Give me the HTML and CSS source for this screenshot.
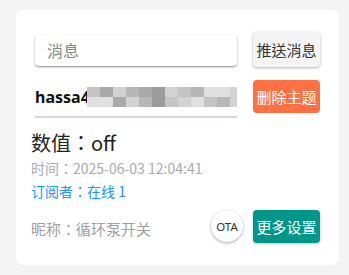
FILE: index.html
```html
<!DOCTYPE html>
<html lang="zh">
<head>
<meta charset="utf-8">
<link rel="stylesheet" href="styles.css">
</head>
<body>
<div class="card">
  <div class="row row-send">
    <div class="input"><span class="placeholder">消息</span></div>
    <button class="btn btn-light">推送消息</button>
  </div>
  <div class="row row-topic">
    <div class="topic">
      <span class="topic-text">hassa4</span><span class="mosaic">
        <i class="c1"></i><i class="c2"></i><i class="c3"></i><i class="c4"></i><i class="c2"></i><i class="c5"></i><i class="c3"></i><i class="c1"></i><i class="c4"></i><i class="c6"></i><i class="c6"></i><i class="c3"></i>
        <i class="c6"></i><i class="c6"></i><i class="c2"></i><i class="c3"></i><i class="c4"></i><i class="c5"></i><i class="c1"></i><i class="c3"></i><i class="c6"></i><i class="c1"></i><i class="c4"></i><i class="c3"></i>
      </span>
    </div>
    <button class="btn btn-orange">删除主题</button>
  </div>
  <div class="info">
    <div class="value">数值：off</div>
    <div class="time">时间：2025-06-03 12:04:41</div>
    <div class="subs">订阅者：在线 1</div>
  </div>
  <div class="row row-bottom">
    <div class="nick">昵称：循环泵开关</div>
    <div class="ota">OTA</div>
    <button class="btn btn-teal">更多设置</button>
  </div>
</div>
</body>
</html>
```
FILE: styles.css
```css
* { box-sizing: border-box; }
html, body { margin: 0; }
body {
  background: #f4f4f4;
  padding: 10px 10px 10px 16px;
  font-family: "Noto Sans CJK TC", "Noto Sans CJK SC", "Noto Sans", sans-serif;
  font-feature-settings: "locl" 0;
  color: #222;
}
.card {
  background: #fff;
  border-radius: 8px;
  padding: 22px 19px 22px 15px;
  height: 255px;
}
.row {
  display: flex;
  align-items: center;
}
.row-send, .row-topic {
  padding-left: 4px;
}
.row-send { height: 35px; }
.input {
  flex: 1;
  height: 32px;
  background: #fff;
  border-radius: 4px;
  box-shadow: 0 1px 2px rgba(0,0,0,0.45);
  display: flex;
  align-items: center;
  padding-left: 12px;
}
.placeholder {
  color: #888;
  font-size: 16px;
  line-height: 20px;
}
.btn {
  border: none;
  font-family: inherit;
  font-feature-settings: inherit;
  font-size: 15px;
  line-height: 20px;
  width: 67px;
  padding: 0;
  border-radius: 4px;
  margin-left: 16px;
  flex: none;
}
.btn-light {
  height: 35px;
  background: #f4f4f4;
  color: #333;
  box-shadow: 0 1px 3px rgba(0,0,0,0.3);
}
.row-topic {
  margin-top: 13px;
  height: 38px;
  align-items: flex-start;
}
.topic {
  flex: 1;
  height: 38px;
  border-bottom: 2px solid #ddd5d5;
  overflow: hidden;
  white-space: nowrap;
  display: flex;
  align-items: center;
  padding-bottom: 2px;
}
.topic-text {
  font-family: "Noto Sans", sans-serif;
  font-weight: bold;
  font-size: 16px;
  line-height: 20px;
  color: #111;
}
.mosaic {
  display: inline-grid;
  grid-template-columns: repeat(12, 13px);
  grid-auto-rows: 10px;
  margin-left: -3px;
  flex: none;
}
.mosaic i { display: block; }
.c1 { background: #c4c4c4; }
.c2 { background: #a9a9a9; }
.c3 { background: #d2d2d2; }
.c4 { background: #b7b7b7; }
.c5 { background: #9c9c9c; }
.c6 { background: #e0e0e0; }
.btn-orange {
  height: 33px;
  background: #ff7043;
  color: #fff;
}
.info {
  margin-top: 10px;
}
.value {
  font-size: 20px;
  line-height: 29px;
  color: #222;
}
.time {
  font-size: 14px;
  line-height: 23px;
  color: #aaa;
}
.subs {
  font-size: 14px;
  line-height: 23px;
  color: #2196f3;
}
.row-bottom {
  margin-top: 7px;
  height: 33px;
}
.nick {
  flex: 1;
  font-size: 15px;
  line-height: 20px;
  color: #a0a0a0;
  padding-top: 4px;
}
.ota {
  width: 32px;
  height: 32px;
  border-radius: 50%;
  background: #fff;
  box-shadow: 0 1px 3px rgba(0,0,0,0.35);
  display: flex;
  align-items: center;
  justify-content: center;
  font-family: "Noto Sans", sans-serif;
  font-size: 11.5px;
  color: #333;
  margin-top: -1px;
}
.btn-teal {
  height: 33px;
  background: #009688;
  color: #fff;
  margin-left: 10px;
  box-shadow: 0 1px 3px rgba(0,0,0,0.25);
}
```
